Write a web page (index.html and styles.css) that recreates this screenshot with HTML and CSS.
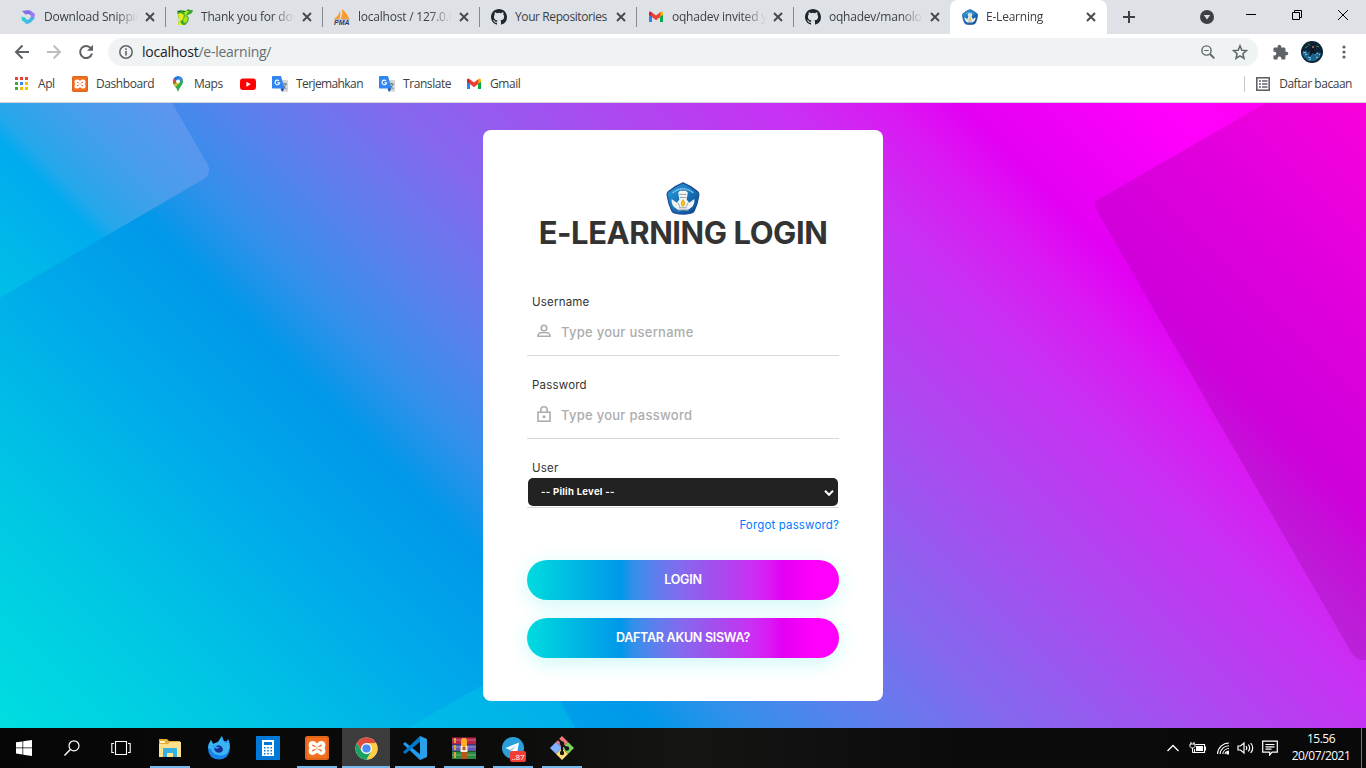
FILE: index.html
```html
<!DOCTYPE html>
<html lang="id">
<head>
<meta charset="utf-8">
<title>E-Learning</title>
<link rel="stylesheet" href="styles.css">
</head>
<body>
<svg class="defs" width="0" height="0" aria-hidden="true">
  <defs>
    <linearGradient id="blueBird" x1="0" y1="0" x2="1" y2="1"><stop offset="0" stop-color="#2a9fe0"/><stop offset="1" stop-color="#08468f"/></linearGradient>
    <symbol id="close" viewBox="0 0 16 16"><path d="M4 4l8 8M12 4l-8 8" stroke="#45494d" stroke-width="1.9" fill="none"/></symbol>
    <symbol id="github" viewBox="0 0 16 16"><path fill="#1f262d" d="M8 0C3.58 0 0 3.58 0 8c0 3.54 2.29 6.53 5.47 7.59.4.07.55-.17.55-.38 0-.19-.01-.82-.01-1.49-2.01.37-2.53-.49-2.69-.94-.09-.23-.48-.94-.82-1.13-.28-.15-.68-.52-.01-.53.63-.01 1.08.58 1.23.82.72 1.21 1.87.87 2.33.66.07-.52.28-.87.51-1.07-1.78-.2-3.64-.89-3.64-3.95 0-.87.31-1.59.82-2.15-.08-.2-.36-1.02.08-2.12 0 0 .67-.21 2.2.82a7.6 7.6 0 014 0c1.53-1.04 2.2-.82 2.2-.82.44 1.1.16 1.92.08 2.12.51.56.82 1.27.82 2.15 0 3.07-1.87 3.75-3.65 3.95.29.25.54.73.54 1.48 0 1.07-.01 1.93-.01 2.2 0 .21.15.46.55.38A8 8 0 0016 8c0-4.42-3.58-8-8-8z"/></symbol>
    <symbol id="gmail" viewBox="0 0 16 16"><path fill="#2684fc" d="M1 5v8h3V6.500z"/><path fill="#00ac47" d="M12 6.500V13h3V5z"/><path fill="#ffba00" d="M12 4v4l3-2.300V4c0-1.600-1.600-2-2.500-1.200z"/><path fill="#c52528" d="M1 4v1.700L4 8V4L3 2.700C2 2.200 1 3 1 4z"/><path fill="#ea4335" d="M3.500 3L8 6.600 12.500 3 12.500 7.700 8 11.200 3.500 7.700z"/></symbol>
    <symbol id="kemdik" viewBox="0 0 32 32">
      <path d="M16 .8Q24 3.800 30.300 9.500Q32 11 31 14.500Q30 22 26.800 28Q25.800 29.800 23.500 30.300Q16 32 8.500 30.300Q6.200 29.800 5.200 28Q2 22 1 14.500Q0 11 1.700 9.500Q8 3.800 16 .8z" fill="url(#blueBird)" stroke="#1c4d92" stroke-width="1.200"/>
      <path d="M6 10.500Q16 2.500 26 10.500" fill="none" stroke="#8fcdf2" stroke-width="1.500" stroke-dasharray="1.400 .5"/>
      <path d="M5 16.500l5 3.500 2.500-3-.5-3-.7-3.500L13 8.500h6l1.700 2-.7 3.500-.5 3 2.500 3 5-3.500Q27.500 21 25 24l-4 3H11l-4-3Q4.500 21 5 16.500z" fill="#f2f4f3"/>
      <path d="M10.500 28q5.500-1.500 11 0M12.500 12h7M13 15h6M11 20l2 4M21 20l-2 4M12 25h8" stroke="#8492a0" stroke-width=".8" fill="none"/>
      <path d="M16 17q3.500 4.500 0 7-3.500-2.500 0-7z" fill="#f4c51b" stroke="#a67a0e" stroke-width=".4"/>
    </symbol>
    <symbol id="xampp" viewBox="0 0 24 24"><rect width="24" height="24" rx="2.500" fill="#f37021"/><rect x="1" y="1" width="22" height="22" rx="2" fill="none" stroke="#cf5d17" stroke-width="1"/><path d="M8 6.800C4.500 6.800 4.500 11 7.700 12 4.500 13 4.500 17.200 8 17.200c2.300 0 2.500-2.500 4-2.500s1.700 2.500 4 2.500c3.500 0 3.500-4.200.3-5.200 3.200-1 3.200-5.200-.3-5.200-2.300 0-2.500 2.500-4 2.500S10.300 6.800 8 6.800z" fill="none" stroke="#fff" stroke-width="3.400"/></symbol>
    <symbol id="translate" viewBox="0 0 16 16"><path d="M7 4h8.200q.8 0 .8.800V15q0 .8-.8.800H10z" fill="#d5d6d8"/><path d="M9.500 8h5.500M12.300 6.800V8M14 8q-1 3.300-4 5M11 9.500q1 2 3.500 3.300" stroke="#667b86" fill="none"/><path d="M.8 0H9l3.500 12.500H.8Q0 12.500 0 11.700V.8Q0 0 .8 0z" fill="#3086f4"/><path d="M8.500 12.500h4L10 16z" fill="#174ea6"/><path d="M7 4.800a2.300 2.300 0 10.600 2H5.300" stroke="#fff" fill="none" stroke-width="1.100"/></symbol>
  </defs>
</svg>

<header class="browser">
  <div class="tabstrip">
    <div class="tabs">
      <div class="tab"><svg class="fav" viewBox="0 0 16 16"><path d="M2 2q5-1 8-.5l4.500 3.200-3 2.200Q9 4 5.500 5.500z" fill="#806de8"/><path d="M10 1.500l5 3.500-1 6-3-2.500z" fill="#9c7cf0"/><path d="M14 9q-2 5.500-8 6L3.500 11 9 10.500l2-3z" fill="#43b7e5"/><path d="M1.500 7.500L6 9v5L2 11.500z" fill="#21d3da"/></svg><span class="tab-title">Download Snipping</span><svg class="x"><use href="#close"/></svg></div>
      <div class="tab"><svg class="fav" viewBox="0 0 16 16"><path d="M0 2l4-1 5 1 2-2 2 1 3 0-1 3-3 1.500-2 1L12 9l-1 4-3 3H1l1-5-1-4z" fill="#3aa52f"/><path d="M1 5l3-1 3 2-1 4-3 3 3 3H1l1-5z" fill="#e4ec1c"/><path d="M7 3l3-1 2 0-2 3-1 2 2 2-1 4-3 1-1-3 2-4z" fill="#a8e01e"/><path d="M1 2.500h3M6 2.500h2" stroke="#156b23"/></svg><span class="tab-title">Thank you for downloading</span><svg class="x"><use href="#close"/></svg></div>
      <div class="tab"><svg class="fav" viewBox="0 0 16 16"><path d="M6 1Q7 6 5.500 10H0Q5 7 6 1zM8 0q6 5 7 10H7Q9 5 8 0z" fill="#f89c2e"/><path d="M0 10.500h16" stroke="#b8b8bd"/><text x="0" y="15.700" class="pma">PMA</text></svg><span class="tab-title">localhost / 127.0.0.1</span><svg class="x"><use href="#close"/></svg></div>
      <div class="tab"><svg class="fav"><use href="#github"/></svg><span class="tab-title">Your Repositories</span><svg class="x"><use href="#close"/></svg></div>
      <div class="tab"><svg class="fav"><use href="#gmail"/></svg><span class="tab-title">oqhadev invited you</span><svg class="x"><use href="#close"/></svg></div>
      <div class="tab last"><svg class="fav"><use href="#github"/></svg><span class="tab-title">oqhadev/manolol</span><svg class="x"><use href="#close"/></svg></div>
      <div class="tab active"><svg class="fav"><use href="#kemdik"/></svg><span class="tab-title">E-Learning</span><svg class="x"><use href="#close"/></svg></div>
    </div>
    <svg class="newtab" viewBox="0 0 14 14"><path d="M7 1v12M1 7h12" stroke="#3c4043" stroke-width="2"/></svg>
    <div class="window-controls">
      <svg viewBox="0 0 14 14" width="14" height="14"><circle cx="7" cy="7" r="7" fill="#3c4043"/><path d="M3.800 5h6.400L7 9.500z" fill="#dee1e6"/></svg>
      <svg class="thin" viewBox="0 0 12 12" width="12" height="12"><path d="M1 5.500h10" stroke="#000"/></svg>
      <svg class="thin" viewBox="0 0 12 12" width="12" height="12"><path d="M1.500 3.500h7v7h-7zM3.500 3.500v-2h7v7h-2" stroke="#000" fill="none"/></svg>
      <svg class="thin" viewBox="0 0 12 12" width="12" height="12"><path d="M1 1l10 10M11 1L1 11" stroke="#000" fill="none"/></svg>
    </div>
  </div>

  <div class="toolbar">
    <svg class="nav" viewBox="0 0 16 16"><path d="M15 8H2M8.500 1.500L2 8l6.500 6.500" fill="none" stroke="#5f6368" stroke-width="2"/></svg>
    <svg class="nav" viewBox="0 0 16 16"><path d="M1 8h13M7.500 1.500L14 8l-6.500 6.500" fill="none" stroke="#bcbec1" stroke-width="2"/></svg>
    <svg class="nav" viewBox="0 0 16 16"><path d="M13.200 4.700A6 6 0 1014 9.500" fill="none" stroke="#5f6368" stroke-width="2"/><path d="M15 .8v6H9z" fill="#5f6368"/></svg>
    <div class="omnibox">
      <svg viewBox="0 0 14 14" width="14" height="14"><circle cx="7" cy="7" r="6.200" fill="none" stroke="#5f6368" stroke-width="1.500"/><path d="M7 6v4.500M7 3.300v1.600" stroke="#5f6368" stroke-width="1.600"/></svg>
      <span class="url">localhost<span class="path">/e-learning/</span></span>
      <svg viewBox="0 0 14 14" width="14" height="14"><circle cx="5.500" cy="5.500" r="4.600" fill="none" stroke="#5f6368" stroke-width="1.400"/><path d="M9 9l4.300 4.300" stroke="#5f6368" stroke-width="1.800"/><path d="M3.200 5.500h4.600" stroke="#5f6368"/></svg>
      <svg viewBox="0 0 16 16" width="16" height="16"><path d="M8 1.800l1.800 4.400 4.700.4-3.600 3.100 1.100 4.600L8 11.800l-4 2.500 1.100-4.600L1.500 6.600l4.700-.4z" fill="none" stroke="#5f6368" stroke-width="1.500"/></svg>
    </div>
    <svg class="ext" viewBox="0 0 24 24"><path fill="#5f6368" d="M20.500 11H19V7c0-1.100-.9-2-2-2h-4V3.500a2.500 2.500 0 00-5 0V5H4c-1.100 0-2 .9-2 2v3.800h1.500a2.700 2.700 0 010 5.400H2V20c0 1.100.9 2 2 2h3.800v-1.500a2.700 2.700 0 015.400 0V22H17c1.100 0 2-.9 2-2v-4h1.500a2.500 2.500 0 000-5z"/></svg>
    <svg class="avatar" viewBox="0 0 22 22"><circle cx="11" cy="11" r="11" fill="#0d2436"/><path d="M1 12l4-3 2 3 2-2 4 3 3-2 4 1-1 4-5 4-7 0-4-4z" fill="#1e638b"/><path d="M2 11l3 1M4 14l2-1M7 16l3 1M14 14l3-2M15 17l2-1M8 19l2-1M18 14l1-1" stroke="#8fd0e8" stroke-width="1" fill="none"/><path d="M10 6l2-1 1 4 3 5-4-2-4 4z" fill="#101725"/><path d="M4 7l3-2M15 5l3 1M7 3l2 1" stroke="#5d7a4b"/><circle cx="12" cy="6" r="1" fill="#bd7a52"/></svg>
    <svg class="dots" viewBox="0 0 4 14"><circle cx="2" cy="2" r="1.600"/><circle cx="2" cy="7" r="1.600"/><circle cx="2" cy="12" r="1.600"/></svg>
  </div>

  <nav class="bookmarks">
    <a><svg viewBox="0 0 16 16"><path fill="#ea4335" d="M1 1h3v3H1zM6 1h3v3H6zM11 1h3v3h-3z"/><path fill="#34a853" d="M1 6h3v3H1z"/><path fill="#4285f4" d="M6 6h3v3H6z"/><path fill="#fbbc04" d="M11 6h3v3h-3zM6 11h3v3H6zM11 11h3v3h-3z"/><path fill="#34a853" d="M1 11h3v3H1z"/></svg><span>Apl</span></a>
    <a><svg><use href="#xampp"/></svg><span>Dashboard</span></a>
    <a><svg viewBox="0 0 16 16"><path d="M3 5.500L8 .2q5 .3 5 5.300 0 3-2.500 5.500Q9 13 8 16 7 12.500 5 10.500 2.500 8 3 5.500z" fill="#34a853"/><path d="M3.700 2.300Q6-.8 10 .6L5.500 6z" fill="#1a73e8"/><path d="M3.700 2.300L6 4.500 3.600 8Q2 5 3.700 2.300z" fill="#ea4335"/><path d="M3.600 8L9.500 7 5.500 11z" fill="#fbbc04"/><path d="M10 .6q2.300.8 2.900 3L10 6 8 3z" fill="#4285f4"/><circle cx="8" cy="5.400" r="2" fill="#fff"/></svg><span>Maps</span></a>
    <a><svg viewBox="0 0 16 16"><rect y="2.500" width="16" height="11.500" rx="3" fill="#f00"/><path d="M6.400 5.800v4.900l4.300-2.450z" fill="#fff"/></svg></a>
    <a><svg><use href="#translate"/></svg><span>Terjemahkan</span></a>
    <a><svg><use href="#translate"/></svg><span>Translate</span></a>
    <a><svg><use href="#gmail"/></svg><span>Gmail</span></a>
    <a class="reading"><svg viewBox="0 0 16 16"><rect x="1.800" y="1.800" width="12.400" height="12.400" fill="none" stroke="#5f6368" stroke-width="1.600"/><path d="M4 5h2M7 5h5.500M4 8h2M7 8h5.500M4 11h2M7 11h5.500" stroke="#5f6368" stroke-width="1.400"/></svg><span>Daftar bacaan</span></a>
  </nav>
</header>

<main class="page">
  <svg class="backdrop" viewBox="0 0 1366 625">
    <defs>
      <linearGradient id="bg" gradientUnits="userSpaceOnUse" x1="-310" y1="310" x2="640" y2="-640">
        <stop offset="0" stop-color="#00dde0"/><stop offset=".12" stop-color="#00c8e4"/><stop offset=".25" stop-color="#00aaea"/><stop offset=".341" stop-color="#0098e9"/><stop offset=".388" stop-color="#3190ea"/><stop offset=".454" stop-color="#5c80ed"/><stop offset=".529" stop-color="#8369ee"/><stop offset=".623" stop-color="#a64ef0"/><stop offset=".736" stop-color="#c930f3"/><stop offset=".793" stop-color="#db18f3"/><stop offset=".831" stop-color="#e300f3"/><stop offset=".934" stop-color="#ff00fb"/><stop offset="1" stop-color="#ff00f4"/>
      </linearGradient>
      <linearGradient id="light" gradientUnits="userSpaceOnUse" x1="-97" y1="97" x2="86" y2="-86">
        <stop offset="0" stop-color="#00bfe7"/><stop offset=".43" stop-color="#00abee"/><stop offset=".5" stop-color="#25a7eb"/><stop offset=".7" stop-color="#439fea"/><stop offset="1" stop-color="#5f94ee"/>
      </linearGradient>
      <linearGradient id="dark" gradientUnits="userSpaceOnUse" x1="400" y1="-400" x2="683" y2="-683">
        <stop offset="0" stop-color="#b923d8"/><stop offset=".16" stop-color="#c411d8"/><stop offset=".27" stop-color="#ce00db"/><stop offset=".6" stop-color="#df00dc"/><stop offset="1" stop-color="#f900dc"/>
      </linearGradient>
    </defs>
    <rect width="1366" height="625" fill="url(#bg)"/>
    <path d="M0 0H172L207.500 61Q212 69 204 76L0 194.500z" fill="url(#light)"/>
    <path d="M1266 0H1366V556.500Q1357 559 1351 549L1096.500 107Q1092 99 1101 95z" fill="url(#dark)"/>
    <path d="M408 625L535 552 575 625z" fill="#00d0e8" fill-opacity=".34"/>
  </svg>

  <form class="card">
    <svg class="logo"><use href="#kemdik"/></svg>
    <h1>E-LEARNING LOGIN</h1>
    <div class="field">
      <label>Username</label>
      <div class="entry">
        <svg viewBox="0 0 14 16"><circle cx="7" cy="5" r="2.800"/><path d="M1 13.300v-.8c0-2 2.500-3 6-3s6 1 6 3v.8z"/></svg>
        <input type="text" placeholder="Type your username">
      </div>
    </div>
    <div class="field">
      <label>Password</label>
      <div class="entry">
        <svg viewBox="0 0 14 16"><rect x="1" y="6.200" width="12" height="9"/><path d="M3.800 6V4a3.200 3.200 0 016.400 0v2"/><circle class="dot" cx="7" cy="10.700" r="1.500"/></svg>
        <input type="password" placeholder="Type your password">
      </div>
    </div>
    <div class="field">
      <label>User</label>
      <div class="picker">
        <select><option>-- Pilih Level --</option></select>
        <svg viewBox="0 0 10 8"><path d="M1 1.800l4 4 4-4" fill="none" stroke="#fff" stroke-width="2"/></svg>
      </div>
    </div>
    <a class="forgot">Forgot password?</a>
    <button type="button">LOGIN</button>
    <button type="button" class="signup">DAFTAR AKUN SISWA?</button>
  </form>
</main>

<footer class="taskbar">
  <div class="apps">
    <div class="app"><svg viewBox="0 0 16 16" width="16" height="16"><path fill="#fff" d="M0 2.300l6.500-.9v6.200H0zM7.200 1.300L16 0v7.600H7.200zM0 8.300h6.500v6.200L0 13.600zM7.200 8.300H16V16l-8.800-1.300z"/></svg></div>
    <div class="app"><svg viewBox="0 0 16 16" width="16" height="16"><circle cx="10" cy="5.800" r="5" fill="none" stroke="#fff" stroke-width="1.200"/><path d="M6.300 9.500L.5 15.500" stroke="#fff" stroke-width="1.400"/></svg></div>
    <div class="app"><svg viewBox="0 0 20 16" width="20" height="16"><path d="M4.500 1.500h11v13h-11zM3 3.500H.8v9H3M17 3.500h2.200v9H17" fill="none" stroke="#fff" stroke-width="1.100"/></svg></div>
    <div class="app open"><svg viewBox="0 0 22 20" width="22" height="20"><path d="M0 1h8l2 2h11v16H0z" fill="#e8ae32"/><path d="M1 3h5v2H1z" fill="#fff4cb"/><path d="M0 6L9 6 11 4h11v15H0z" fill="#ffe18d"/><path d="M4 19v-8q0-1 1-1h12q1 0 1 1v8h-4v-4H8v4z" fill="#35b0e2"/></svg></div>
    <div class="app"><svg viewBox="0 0 24 24" width="24" height="24"><path d="M4 4l2 4 5-2 4-6 2 5 3 0 1-2q2.500 4 2 9.500Q22 23 12 23.500 1.500 23 1 13q0-5 3-9z" fill="#1583ea"/><path d="M4 4l2 4 5-2 4-6q0 5 4 7l1 0 1-4q3 8 0 13-4 5-10 3-6-1-7-6l-3-1q0-4 3-8z" fill="#3bb5f2"/><path d="M8 11q3-3 6.500-.5 3 3 0 5.500-3.500 2-6.500-1Q6.500 13 8 11z" fill="#1c2f96"/><path d="M4 10q4-2 6 1l3 0-3 2z" fill="#2aa1ec"/></svg></div>
    <div class="app"><svg viewBox="0 0 24 24" width="24" height="24"><path d="M0 0h24v24H0z" fill="#0078d7"/><path d="M6 4h12v16H6z" fill="#fff"/><path d="M8 6h8v3H8zM8 11h1.500v1.500H8zM11.200 11h1.500v1.500h-1.500zM14.500 11H16v1.500h-1.500zM8 14h1.500v1.500H8zM11.200 14h1.500v1.500h-1.500zM14.500 14H16v1.500h-1.500zM8 17h1.500v1.500H8zM11.200 17h1.500v1.500h-1.500zM14.500 17H16v1.500h-1.500z" fill="#0078d7"/></svg></div>
    <div class="app open"><svg width="24" height="24"><use href="#xampp"/></svg></div>
    <div class="app open current"><svg viewBox="0 0 24 24" width="23" height="23"><circle cx="12" cy="12" r="11.500" fill="#fff"/><path d="M2.040 6.250A11.500 11.500 0 0121.960 6.250H12A5.750 5.750 0 007.020 14.880z" fill="#de4b3f"/><path d="M21.960 6.250A11.500 11.500 0 0112 23.500L16.980 14.880A5.750 5.750 0 0012 6.250z" fill="#ffcd42"/><path d="M12 23.500A11.500 11.500 0 012.040 6.250L7.020 14.880A5.750 5.750 0 0016.980 14.880z" fill="#1aa261"/><circle cx="12" cy="12" r="5.500" fill="#f1f1f1"/><circle cx="12" cy="12" r="4.300" fill="#4a8bf5"/></svg></div>
    <div class="app open"><svg viewBox="0 0 24 24" width="24" height="24"><path d="M0 8l2-2L18 19l-1 5z" fill="#1f9cf0"/><path d="M0 16l2 2L18 5l-1-5z" fill="#0078c9"/><path d="M17 0l7 3v18l-7 3z" fill="#29a0e8"/></svg></div>
    <div class="app open"><svg viewBox="0 0 24 22" width="24" height="22"><path d="M0 0h24v7H0z" fill="#b5264a"/><path d="M0 7h24v7H0z" fill="#6259ad"/><path d="M0 14h24v8H0z" fill="#2c8a40"/><path d="M0 .5h24M0 7.500h24M0 14.500h24" stroke="#00000066"/><path d="M0 3h24M0 10h24M0 18h24" stroke="#ffffff55"/><path d="M2 1h2v5H2zM2 8h2v5H2zM2 15h2v6H2z" fill="#d7aa37"/><path d="M9 4h6v18H9z" fill="#b9571b"/><path d="M10 1h4l1 3v6h-6V4z" fill="#ffad25"/><path d="M8.500 9h2v4h3V9h2v6h-7z" fill="#f3ead9"/></svg></div>
    <div class="app open"><svg viewBox="0 0 24 24" width="24" height="24"><circle cx="12" cy="12" r="11" fill="#2aa0da"/><path d="M4.500 12L18 6.500 15.800 18 11.500 15z" fill="#fff"/><path d="M9 13.500L16 9l-5 6-.5 3z" fill="#b9d5e6"/></svg><span class="badge">..87</span></div>
    <div class="app open"><svg viewBox="0 0 24 24" width="24" height="24"><path d="M12 0l6 6-6 6-6-6z" fill="#f4787a"/><path d="M6 6l6 6-6 6-6-6z" fill="#80b3ff"/><path d="M18 6l6 6-6 6-6-6z" fill="#80d25a"/><path d="M12 12l6 6-6 6-6-6z" fill="#ffe075"/><path d="M8 3l4 4v11M12 8l5 5" stroke="#151515" stroke-width="2" fill="none"/><circle cx="12" cy="7.500" r="2.200" fill="#151515"/><circle cx="12" cy="17" r="2.200" fill="#151515"/><circle cx="17" cy="12.500" r="2.200" fill="#151515"/></svg></div>
  </div>
  <div class="tray">
    <svg viewBox="0 0 14 14" width="14" height="14"><path d="M1.500 10L7 4.500l5.500 5.500" fill="none" stroke="#fff" stroke-width="1.300"/></svg>
    <svg viewBox="0 0 18 14" width="18" height="14"><path d="M6.500 3.500h9v8H5.500V8M16.500 5.500v4" fill="none" stroke="#fff" stroke-width="1.100"/><path d="M7 5h7v5H7z" fill="#fff"/><path d="M2 1v2M5 1v2M1 3h5v2.500L4.500 7h-2L1 5.500zM3.500 7v4.500H6" stroke="#fff" fill="none"/></svg>
    <svg viewBox="0 0 14 14" width="14" height="14"><path d="M1.500 13A11.500 11.500 0 0113 2M4 13a9 9 0 019-8.300M6.700 13A6.500 6.500 0 0113 7.500M9 13q.5-2.500 4-2.900" fill="none" stroke="#fff" stroke-width="1.100"/><path d="M10.500 11h2.500v2.500h-2.500z" fill="#fff"/></svg>
    <svg viewBox="0 0 17 14" width="17" height="14"><path d="M1 5h2.500L7 2v10L3.500 9H1zM9 5q1.500 2 0 4M11.300 3.500q2.700 3.500 0 7M13.700 2q4 5 0 10" fill="none" stroke="#fff" stroke-width="1.200"/></svg>
    <svg viewBox="0 0 16 16" width="16" height="16"><path d="M.7 1.200h14.600v11H10L7.700 15v-2.800h-7zM3.500 4.500h9M3.500 6.800h9M3.500 9.100h6" fill="none" stroke="#fff" stroke-width="1.200"/></svg>
    <div class="clock"><span>15.56</span><span>20/07/2021</span></div>
    <i class="peek"></i>
  </div>
</footer>
</body>
</html>
```
FILE: styles.css
```css
* { box-sizing: border-box; }

body {
  margin: 0;
  width: 1366px;
  height: 768px;
  overflow: hidden;
  display: flex;
  flex-direction: column;
  font-family: "Open Sans", "Noto Sans", sans-serif;
  font-size: 12px;
  color: #3c4043;
}

svg { display: block; flex: none; }
.defs { position: absolute; }

/* Browser chrome */
.browser { height: 103px; flex: none; background: #fff; border-bottom: 1px solid #d4d6d9; }
.tabstrip { height: 34px; display: flex; align-items: center; background: #dee1e6; padding-left: 9px; }
.tabs { display: flex; height: 34px; }
.tab { width: 157px; padding: 0 8px 0 12px; display: flex; align-items: center; position: relative; }
.tab::after { content: ""; position: absolute; right: 0; top: 7px; width: 1px; height: 20px; background: #85888d; }
.tab.last::after, .tab.active::after { display: none; }
.tab.active { background: #fff; border-radius: 8px 8px 0 0; margin-left: -1px; padding-left: 12px; }
.tab.active .tab-title { margin-left: 8px; }
.tab.active .x { margin-left: 4px; }
.fav { width: 16px; height: 16px; margin-left: -1px; }
.tab.active .fav { margin-left: 0; }
.tab-title {
  width: 94px; margin-left: 8px; overflow: hidden; white-space: nowrap; letter-spacing: -.22px; line-height: 18px;
  -webkit-mask-image: linear-gradient(90deg, #000 76%, transparent);
  mask-image: linear-gradient(90deg, #000 76%, transparent);
}
.tab:nth-child(4) .tab-title { -webkit-mask-image: none; mask-image: none; letter-spacing: -.4px; }
.x { width: 16px; height: 16px; margin-left: 4px; }
.pma { font: italic bold 7px "Liberation Sans", sans-serif; fill: #34355f; }
.newtab { width: 14px; height: 14px; margin-left: 15px; }
.window-controls { margin-left: auto; display: flex; align-items: center; gap: 34px; padding-right: 17px; }
.window-controls .thin { margin-top: -5px; }
.window-controls svg:first-child { margin-right: -3px; }

.toolbar { height: 36px; display: flex; align-items: center; padding-left: 14px; }
.nav { width: 16px; height: 16px; margin-right: 16px; }
.omnibox { width: 1150px; height: 28px; margin-left: -2px; border-radius: 14px; background: #eff3f4; display: flex; align-items: center; padding: 0 10px 0 11px; }
.url { flex: 1; margin-left: 9px; padding-bottom: 1px; font-size: 14px; letter-spacing: -.25px; color: #202124; }
.path { color: #686c70; }
.omnibox svg:last-child { margin-left: 17px; }
.ext { width: 17px; height: 17px; margin-left: 14px; }
.avatar { width: 22px; height: 22px; margin-left: 12px; }
.dots { width: 4px; height: 14px; margin-left: 19px; fill: #5f6368; }

.bookmarks {
  height: 28px; padding: 0 14px;
  display: grid; grid-template-columns: 58px 98px 70px 32px 107px 87px 1fr auto; align-items: center;
}
.bookmarks a { display: flex; align-items: center; gap: 8px; white-space: nowrap; letter-spacing: -.42px; }
.bookmarks span { padding-bottom: 1px; }
.bookmarks a:nth-child(5) { letter-spacing: -.6px; }
.bookmarks svg { width: 16px; height: 16px; }
.bookmarks a.reading { border-left: 1px solid #c5c8cb; padding-left: 10px; height: 16px; letter-spacing: -.46px; }

/* Login page */
.page { height: 625px; flex: none; position: relative; display: flex; justify-content: center; align-items: flex-start; padding-top: 27px; }
.backdrop { position: absolute; left: 0; top: 0; width: 1366px; height: 625px; }
.card {
  position: relative; width: 400px; height: 571px; padding: 52px 44px 0; background: #fff; border-radius: 8px;
  display: flex; flex-direction: column; font-family: Inter, "Open Sans", sans-serif;
}
.logo { width: 34px; height: 33px; align-self: center; }
h1 { margin: 0; font-size: 31px; line-height: 36px; font-weight: 700; letter-spacing: -.45px; color: #333; text-align: center; white-space: nowrap; }
.field { margin-top: 21px; border-bottom: 1px solid #d9d9d9; }
h1 + .field { margin-top: 43px; }
label { display: block; padding-left: 5px; font-size: 11.5px; line-height: 16px; letter-spacing: .2px; color: #333; }
.entry { height: 45px; display: flex; align-items: center; padding-left: 10px; }
.entry svg { width: 14px; height: 16px; margin-top: -4px; fill: none; stroke: #adadad; stroke-width: 1.6; }
.entry .dot { fill: #adadad; stroke: none; }
.entry input { flex: 1; min-width: 0; border: 0; padding: 0 0 1px 10px; background: none; font: 500 13px Inter, sans-serif; letter-spacing: .27px; }
.entry input::placeholder { color: #adadad; opacity: 1; }
.picker { position: relative; margin-top: 2px; padding: 0 1px 1px; }
.picker select {
  display: block; width: 100%; height: 28px; border: 0; border-radius: 5px; padding: 0 13px 1px;
  appearance: none; background: #222; color: #fff; font: 700 9.5px Inter, sans-serif; letter-spacing: .28px;
}
.picker svg { position: absolute; right: 5px; top: 11px; width: 10px; height: 8px; }
.forgot { align-self: flex-end; margin-top: 9px; font-size: 11.5px; line-height: 16px; letter-spacing: .15px; color: #007bff; }
button {
  height: 40px; margin-top: 27px; flex: none; border: 0; padding: 0 0 1px; border-radius: 20px; color: #fff; font: 600 12.5px Inter, sans-serif; letter-spacing: -.27px;
  background: linear-gradient(90deg, #00dbde, #0098e9 30%, #3190ea 34%, #627ded 42%, #8668ee 50%, #a64ced 61%, #c930f3 72%, #db18f3 78%, #e300f3 82%, #ff00fb 92%, #ff00fb);
  box-shadow: 0 5px 20px rgba(0, 219, 222, .2);
}
.signup { margin-top: 18px; }

/* Taskbar */
.taskbar { height: 40px; flex: none; display: flex; justify-content: space-between; color: #fff; background: linear-gradient(90deg, #060606, #0b0b0a 35%, #151514 50%, #0b0b0b 70%, #090909); }
.apps { display: grid; grid-template-columns: 48px 48px 49px repeat(9, 49px); }
.app { position: relative; display: flex; align-items: center; justify-content: center; }
.app.open::after { content: ""; position: absolute; bottom: 0; left: 5px; width: 40px; height: 2px; background: #76b9ed; }
.app.current { background: #3c3c3c; margin-left: 1px; }
.app.current::after { left: 0; width: 48px; }
.badge { position: absolute; left: 22px; top: 23px; width: 16px; height: 11px; border-radius: 2px; background: #f23c34; font-size: 8px; line-height: 11px; text-align: center; letter-spacing: -.2px; }
.tray { display: flex; align-items: center; padding-right: 4px; }
.tray svg:nth-child(2) { margin-left: 9px; }
.tray svg:nth-child(3) { margin-left: 9px; }
.tray svg:nth-child(4) { margin-left: 7px; }
.tray svg:nth-child(5) { margin-left: 8px; }
.clock { width: 86px; display: flex; flex-direction: column; align-items: center; line-height: 17px; letter-spacing: -.5px; padding: 0 0 2px; margin-right: -3px; }
.peek { width: 1px; height: 40px; background: #777; }
```
